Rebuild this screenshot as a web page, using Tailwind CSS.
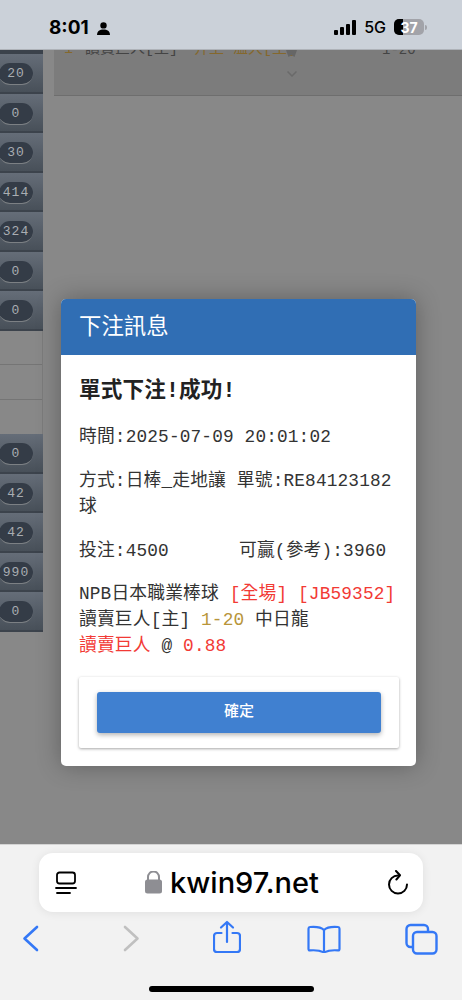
<!DOCTYPE html>
<html lang="zh-Hant">
<head>
<meta charset="UTF-8">
<meta name="viewport" content="width=device-width, initial-scale=1.0">
<title>下注訊息</title>
<script src="https://cdn.jsdelivr.net/npm/@tailwindcss/browser@4"></script>
</head>
<body class="w-[462px] h-[1000px] overflow-hidden relative bg-[#888888] font-['Liberation_Sans','Noto_Sans_CJK_TC',sans-serif]">

<!-- status bar -->
<div class="h-[50px] bg-[#cbd1d9] border-b border-[#aeb2b8] flex items-start justify-between pt-[17px] pl-[49px] pr-[35px] relative z-10">
  <div class="flex items-center gap-[8px]">
    <span class="text-[19px] leading-[22px] font-bold text-black font-['Inter',sans-serif]">8:01</span>
    <svg width="13" height="13" viewBox="0 0 13 13" fill="#000"><circle cx="6.5" cy="3.4" r="3.2"/><path d="M0 13c0-3.6 2.8-5.4 6.5-5.4S13 9.400 13 13z"/></svg>
  </div>
  <div class="flex items-center gap-[8px] pt-[2px]">
    <div class="flex items-end gap-[2px] h-[15px]">
      <span class="w-[4px] h-[5px] bg-black rounded-[1px]"></span>
      <span class="w-[4px] h-[8px] bg-black rounded-[1px]"></span>
      <span class="w-[4px] h-[11px] bg-black rounded-[1px]"></span>
      <span class="w-[4px] h-[15px] bg-black rounded-[1px]"></span>
    </div>
    <span class="text-[16px] leading-[16px] font-medium text-black font-['Inter',sans-serif]">5G</span>
    <div class="relative flex items-center">
      <div class="w-[30px] h-[16px] rounded-[5px] bg-[#a2a3a9] overflow-hidden relative">
        <div class="w-[9px] h-full bg-black"></div>
        <span class="absolute inset-0 flex items-center justify-center text-[14px] font-bold text-white font-['Inter',sans-serif]">37</span>
      </div>
      <span class="ml-[1px] w-[2px] h-[5px] rounded-r-[2px] bg-[#a2a3a9]"></span>
    </div>
  </div>
</div>

<!-- page behind the dialog -->
<div class="flex h-[794px]">
  <div class="w-[43px] shrink-0 font-['Liberation_Mono',monospace] text-[#a9adb2] text-[13px]">
    <div class="h-[4px] bg-[#3b424b]"></div>
    <div class="flex flex-col">
      <div class="h-[39.5px] flex items-center border-b-2 border-[#3c434c] bg-gradient-to-b from-[#656d78] to-[#485059]"><span class="-ml-[1px] mt-[3px] w-[34px] h-[22px] rounded-full bg-[#343c47] border-b border-[#7c8084] flex items-center justify-center tracking-[1px]">20</span></div>
      <div class="h-[39.5px] flex items-center border-b-2 border-[#3c434c] bg-gradient-to-b from-[#656d78] to-[#485059]"><span class="-ml-[1px] mt-[3px] w-[34px] h-[22px] rounded-full bg-[#343c47] border-b border-[#7c8084] flex items-center justify-center tracking-[1px]">0</span></div>
      <div class="h-[39.5px] flex items-center border-b-2 border-[#3c434c] bg-gradient-to-b from-[#656d78] to-[#485059]"><span class="-ml-[1px] mt-[3px] w-[34px] h-[22px] rounded-full bg-[#343c47] border-b border-[#7c8084] flex items-center justify-center tracking-[1px]">30</span></div>
      <div class="h-[39.5px] flex items-center border-b-2 border-[#3c434c] bg-gradient-to-b from-[#656d78] to-[#485059]"><span class="-ml-[1px] mt-[3px] w-[34px] h-[22px] rounded-full bg-[#343c47] border-b border-[#7c8084] flex items-center justify-center tracking-[1px]">414</span></div>
      <div class="h-[39.5px] flex items-center border-b-2 border-[#3c434c] bg-gradient-to-b from-[#656d78] to-[#485059]"><span class="-ml-[1px] mt-[3px] w-[34px] h-[22px] rounded-full bg-[#343c47] border-b border-[#7c8084] flex items-center justify-center tracking-[1px]">324</span></div>
      <div class="h-[39.5px] flex items-center border-b-2 border-[#3c434c] bg-gradient-to-b from-[#656d78] to-[#485059]"><span class="-ml-[1px] mt-[3px] w-[34px] h-[22px] rounded-full bg-[#343c47] border-b border-[#7c8084] flex items-center justify-center tracking-[1px]">0</span></div>
      <div class="h-[39.5px] flex items-center border-b-2 border-[#3c434c] bg-gradient-to-b from-[#656d78] to-[#485059]"><span class="-ml-[1px] mt-[3px] w-[34px] h-[22px] rounded-full bg-[#343c47] border-b border-[#7c8084] flex items-center justify-center tracking-[1px]">0</span></div>
    </div>
    <div class="border-r border-[#7b7b7b]">
      <div class="h-[34.5px] border-b border-[#757575]"></div>
      <div class="h-[34.5px] border-b border-[#757575]"></div>
      <div class="h-[34.5px]"></div>
    </div>
    <div class="flex flex-col">
      <div class="h-[39.5px] flex items-center border-b-2 border-[#3c434c] bg-gradient-to-b from-[#656d78] to-[#485059]"><span class="-ml-[1px] mt-[3px] w-[34px] h-[22px] rounded-full bg-[#343c47] border-b border-[#7c8084] flex items-center justify-center tracking-[1px]">0</span></div>
      <div class="h-[39.5px] flex items-center border-b-2 border-[#3c434c] bg-gradient-to-b from-[#656d78] to-[#485059]"><span class="-ml-[1px] mt-[3px] w-[34px] h-[22px] rounded-full bg-[#343c47] border-b border-[#7c8084] flex items-center justify-center tracking-[1px]">42</span></div>
      <div class="h-[39.5px] flex items-center border-b-2 border-[#3c434c] bg-gradient-to-b from-[#656d78] to-[#485059]"><span class="-ml-[1px] mt-[3px] w-[34px] h-[22px] rounded-full bg-[#343c47] border-b border-[#7c8084] flex items-center justify-center tracking-[1px]">42</span></div>
      <div class="h-[39.5px] flex items-center border-b-2 border-[#3c434c] bg-gradient-to-b from-[#656d78] to-[#485059]"><span class="-ml-[1px] mt-[3px] w-[34px] h-[22px] rounded-full bg-[#343c47] border-b border-[#7c8084] flex items-center justify-center tracking-[1px]">990</span></div>
      <div class="h-[39.5px] flex items-center border-b-2 border-[#3c434c] bg-gradient-to-b from-[#656d78] to-[#485059]"><span class="-ml-[1px] mt-[3px] w-[34px] h-[22px] rounded-full bg-[#343c47] border-b border-[#7c8084] flex items-center justify-center tracking-[1px]">0</span></div>
    </div>
  </div>
  <div class="flex-1 pl-[11px]">
    <div class="h-[46px] bg-[#7c7c7c] border-b border-[#6e6e6e] relative">
      <div class="absolute left-[10px] -top-[11px] text-[15px] leading-[22px] text-[#444] whitespace-nowrap font-['Liberation_Mono','Noto_Sans_CJK_TC',monospace]"><span class="text-[#85682c]">1</span><span class="ml-[12px]">讀賣巨人[主]</span><span class="text-[#85682c] ml-[16px]">井上 溫大[主]</span></div>
      <svg class="absolute left-[232px] top-[0px]" width="11" height="7" viewBox="0 0 11 7" fill="#666"><path d="M0 0h11L8.500 7 5.500 5 2.500 7z"/></svg>
      <svg class="absolute left-[233px] top-[21px]" width="10" height="6" viewBox="0 0 10 6" fill="none" stroke="#6a6a6a" stroke-width="1.500"><path d="M.5 .5L5 5l4.500-4.500"/></svg>
      <div class="absolute left-[328px] -top-[11px] text-[14px] leading-[22px] text-[#444] font-['Liberation_Mono',monospace]">1-20</div>
    </div>
  </div>
</div>

<!-- dialog -->
<div class="absolute left-[61px] top-[299px] w-[355px] h-[467px] bg-white rounded-[5px] overflow-hidden shadow-[0_0_24px_rgba(0,0,0,0.3)] font-['Liberation_Mono','Noto_Sans_CJK_TC',monospace]">
  <div class="h-[56px] bg-[#306eb4] flex items-center pl-[18px] text-[22.400px] text-white font-['Liberation_Sans','Noto_Sans_CJK_TC',sans-serif]">下注訊息</div>
  <div class="pl-[18px] pr-[12px] pt-[22px] text-[17.78px] leading-[26px] tracking-[0.15px] text-[#333]">
    <h2 class="text-[21.600px] leading-[28px] font-semibold text-[#222]">單式下注!成功!</h2>
    <p class="mt-[19px]">時間:2025-07-09 20:01:02</p>
    <p class="mt-[18px]">方式:日棒_走地讓 單號:RE84123182球</p>
    <p class="mt-[18px] flex"><span class="w-[160px]">投注:4500</span><span>可贏(參考):3960</span></p>
    <p class="mt-[17px]">NPB日本職業棒球 <span class="text-[#f23a35]">[全場] [JB59352]</span><br>讀賣巨人[主] <span class="text-[#b8953a]">1-20</span> 中日龍<br><span class="text-[#f23a35]">讀賣巨人</span> @ <span class="text-[#f23a35]">0.88</span></p>
  </div>
  <div class="absolute left-[18px] top-[378px] w-[320px] h-[71px] rounded-[2px] bg-white shadow-[0_1px_3px_rgba(0,0,0,0.35)] flex items-center justify-center">
    <button class="w-[284px] h-[41px] rounded-[3px] bg-[#4080d0] text-white text-[15px] leading-[36px] pb-[3px] font-medium shadow-[0_2px_5px_rgba(0,0,0,0.3)] font-['Liberation_Sans','Noto_Sans_CJK_TC',sans-serif]">確定</button>
  </div>
</div>

<!-- safari bottom bar -->
<div class="h-[156px] bg-[#f2f2f2] border-t border-[#d4d4d4] relative">
  <div class="absolute left-[39px] top-[8px] w-[384px] h-[59px] bg-white rounded-[14px] shadow-[0_1px_10px_rgba(0,0,0,0.08)] flex items-center justify-between pl-[16px] pr-[14px]">
    <svg width="22" height="24" viewBox="0 0 22 24" fill="none" stroke="#000" stroke-width="1.800" stroke-linecap="round"><rect x="2" y="1.500" width="18" height="11" rx="2.500"/><path d="M1 17h20M2 22h13"/></svg>
    <div class="flex items-center gap-[8px]">
      <svg width="17" height="23" viewBox="0 0 17 23" fill="#8e8e93"><path d="M3 9V6a5.500 5.500 0 0 1 11 0v3" fill="none" stroke="#8e8e93" stroke-width="2"/><rect x="0" y="8.500" width="17" height="14" rx="2.500"/></svg>
      <span class="text-[29px] leading-[34px] font-medium text-black font-['Inter',sans-serif]">kwin97.net</span>
    </div>
    <svg width="22" height="25" viewBox="0 0 22 25" fill="none" stroke="#000" stroke-width="2" stroke-linecap="round" stroke-linejoin="round"><path d="M11 5.500a9 9 0 1 0 9 9"/><path d="M8 1l4 4.300-3.600 4.200" transform="translate(1 0)"/></svg>
  </div>
  <svg class="absolute left-[22px] top-[80px]" width="17" height="27" viewBox="0 0 17 27" fill="none" stroke="#3478f6" stroke-width="2.600" stroke-linecap="round" stroke-linejoin="round"><path d="M15 2L2.500 13.500 15 25"/></svg>
  <svg class="absolute left-[123px] top-[80px]" width="17" height="27" viewBox="0 0 17 27" fill="none" stroke="#c0c0c0" stroke-width="2.600" stroke-linecap="round" stroke-linejoin="round"><path d="M2 2l12.500 11.500L2 25"/></svg>
  <svg class="absolute left-[213px] top-[75px]" width="28" height="34" viewBox="0 0 28 34" fill="none" stroke="#3478f6" stroke-width="2.200" stroke-linecap="round" stroke-linejoin="round"><path d="M8.500 13H4a3 3 0 0 0-3 3v13a3 3 0 0 0 3 3h20a3 3 0 0 0 3-3V16a3 3 0 0 0-3-3h-4.500"/><path d="M14 22V2M8 7.500L14 2l6 5.500"/></svg>
  <svg class="absolute left-[307px] top-[80px]" width="34" height="28" viewBox="0 0 34 28" fill="none" stroke="#3478f6" stroke-width="2.200" stroke-linecap="round" stroke-linejoin="round"><path d="M17 5C14 2 9 1.500 3 2c-1 .100-1.500.800-1.500 1.800V24c0 1 .5 1.500 1.500 1.400 6-.5 10 0 14 2 4-2 8-2.500 14-2 1 .1 1.500-.4 1.500-1.400V3.800C32.500 2.800 32 2.100 31 2c-6-.5-11 0-14 3z"/><path d="M17 5v22"/></svg>
  <svg class="absolute left-[405px] top-[78px]" width="33" height="32" viewBox="0 0 33 32" fill="none" stroke="#3478f6" stroke-width="2.400" stroke-linejoin="round"><path d="M7 24H5.500A4 4 0 0 1 1.500 20V6a4 4 0 0 1 4-4h13.500a4 4 0 0 1 4 4v2"/><rect x="8" y="9" width="23.500" height="21.500" rx="4"/></svg>
  <div class="absolute left-[149px] top-[141px] w-[165px] h-[6px] rounded-full bg-black"></div>
</div>
</body>
</html>
